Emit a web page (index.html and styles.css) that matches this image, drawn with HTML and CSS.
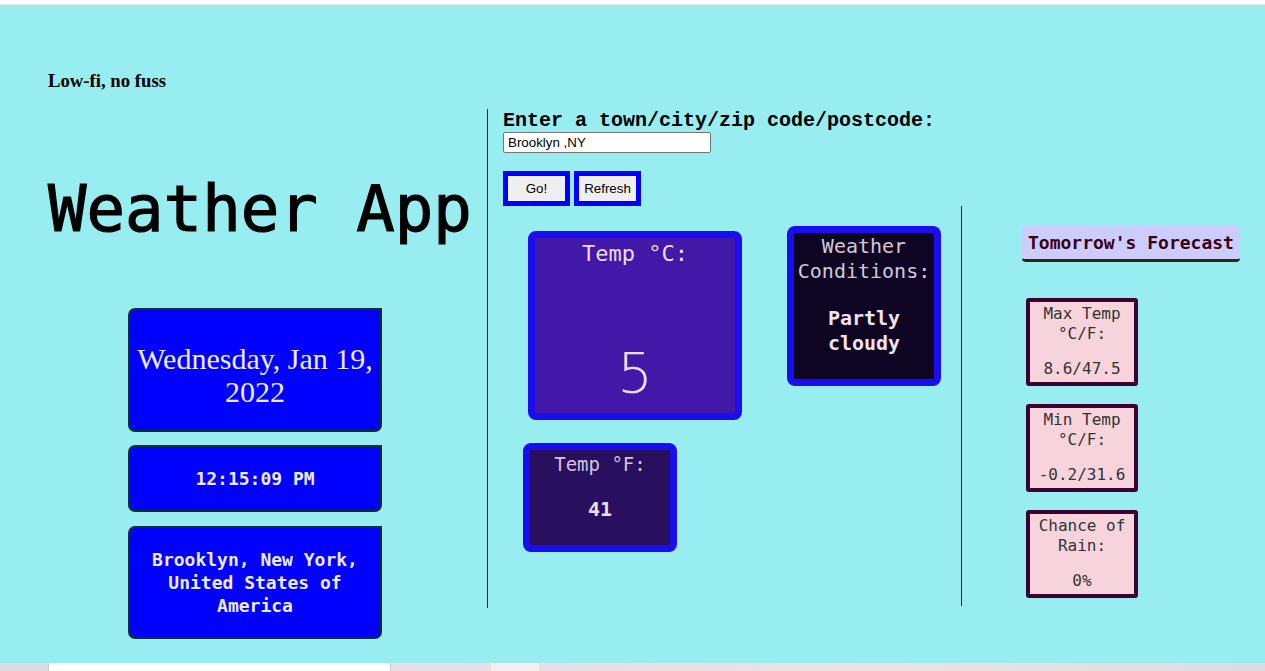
FILE: index.html
```html
<!DOCTYPE html>
<html lang="en">
<head>
<meta charset="utf-8">
<title>Weather App</title>
<link rel="stylesheet" href="styles.css">
</head>
<body>
<div class="topbar"></div>
<main class="app">
  <section class="intro">
    <h3 class="tagline">Low-fi, no fuss</h3>
    <h1 class="title">Weather App</h1>
    <div class="info-box date-box">Wednesday, Jan 19, 2022</div>
    <div class="info-box time-box">12:15:09 PM</div>
    <div class="info-box place-box">Brooklyn, New York, United States of America</div>
  </section>
  <section class="panel">
    <form class="search">
      <label class="search-label" for="city">Enter a town/city/zip code/postcode:</label>
      <input id="city" class="search-input" type="text" value="Brooklyn ,NY">
      <div class="buttons">
        <button type="button" class="btn">Go!</button>
        <button type="button" class="btn">Refresh</button>
      </div>
    </form>
    <div class="results">
      <div class="today">
        <div class="temps">
          <div class="card card-c">
            <div class="card-c-label">Temp °C:</div>
            <div class="card-c-value">5</div>
          </div>
          <div class="card card-f">
            <div class="card-f-label">Temp °F:</div>
            <div class="card-f-value">41</div>
          </div>
        </div>
        <div class="card card-cond">
          <div class="cond-label">Weather Conditions:</div>
          <div class="cond-value">Partly cloudy</div>
        </div>
      </div>
      <aside class="forecast">
        <div class="fc-title">Tomorrow's Forecast</div>
        <div class="fc-box">
          <div class="fc-label">Max Temp °C/F:</div>
          <div class="fc-value">8.6/47.5</div>
        </div>
        <div class="fc-box">
          <div class="fc-label">Min Temp °C/F:</div>
          <div class="fc-value">-0.2/31.6</div>
        </div>
        <div class="fc-box">
          <div class="fc-label">Chance of Rain:</div>
          <div class="fc-value">0%</div>
        </div>
      </aside>
    </div>
  </section>
</main>
<div class="taskbar">
  <span class="tb-left"></span>
  <span class="tb-white"></span>
  <span class="tb-mid"></span>
  <span class="tb-light"></span>
  <span class="tb-rest"></span>
</div>
</body>
</html>
```

FILE: styles.css
```css
* { box-sizing: border-box; }

html, body {
  margin: 0;
  padding: 0;
  background: #ffffff;
  height: 671px;
  overflow: hidden;
}

.topbar {
  height: 5px;
  background: #ffffff;
  border-bottom: 1px solid #e4e4e4;
}

.app {
  height: 658px;
  background: #97edf0;
  display: flex;
  align-items: flex-start;
}

/* ---------- left column ---------- */
.intro {
  width: 487px;
  flex: none;
  padding-left: 48px;
}

.tagline {
  margin: 65px 0 0;
  font-family: "Liberation Serif", "Times New Roman", serif;
  font-size: 18.72px;
  font-weight: bold;
  line-height: 22px;
  color: #000;
}

.title {
  margin: 80px 0 0;
  font-family: "DejaVu Sans Mono", monospace;
  font-size: 64px;
  font-weight: normal;
  line-height: 75px;
  color: #000;
  -webkit-text-stroke: 1.2px #000;
  white-space: nowrap;
}

.info-box {
  width: 254px;
  margin-left: 80px;
  background: #0000ff;
  border: 2px solid #0d3427;
  border-radius: 7px 0 7px 7px;
  color: #ecebf4;
  display: flex;
  align-items: center;
  justify-content: center;
  text-align: center;
  padding: 0 6px;
}

.date-box {
  margin-top: 61px;
  height: 124px;
  padding-top: 9px;
  font-family: "Liberation Serif", "Times New Roman", serif;
  font-size: 30px;
  line-height: 33px;
}

.time-box {
  margin-top: 13px;
  height: 67px;
  font-family: "DejaVu Sans Mono", monospace;
  font-weight: bold;
  font-size: 18px;
}

.place-box {
  margin-top: 14px;
  height: 113px;
  font-family: "DejaVu Sans Mono", monospace;
  font-weight: bold;
  font-size: 18px;
  line-height: 23px;
}

/* ---------- right panel ---------- */
.panel {
  margin-top: 104px;
  width: 778px;
  height: 499px;
  border-left: 1px solid #1e1e1e;
  padding: 1px 0 0 15px;
  flex: none;
}

.search {
  margin: 0;
}

.search-label {
  display: block;
  font-family: "Liberation Mono", "Courier New", monospace;
  font-weight: bold;
  font-size: 20px;
  line-height: 22px;
  color: #000;
  white-space: nowrap;
}

.search-input {
  display: block;
  width: 208px;
  height: 21px;
  margin: 0;
  padding: 1px 4px;
  border: 1px solid #767676;
  border-radius: 2px;
  background: #fff;
  font-family: "Liberation Sans", Arial, sans-serif;
  font-size: 13.33px;
  color: #000;
}

.buttons {
  display: flex;
  gap: 4px;
  margin-top: 18px;
}

.btn {
  width: 67px;
  height: 35px;
  margin: 0;
  padding: 0;
  border: 5px solid #0000ff;
  background: #efefef;
  font-family: "Liberation Sans", Arial, sans-serif;
  font-size: 13.33px;
  color: #000;
}

.results {
  display: flex;
  align-items: flex-start;
}

.today {
  width: 458px;
  flex: none;
  display: flex;
  align-items: flex-start;
}

.temps {
  display: flex;
  flex-direction: column;
  align-items: flex-start;
}

.card {
  border: 7px solid #1a0df2;
  border-radius: 8px;
  text-align: center;
  color: #efdcef;
}

.card-c {
  margin: 25px 0 0 25px;
  width: 214px;
  height: 189px;
  background: #4118a8;
  padding-top: 3px;
}

.card-c-label {
  font-family: "DejaVu Sans Mono", monospace;
  font-size: 22px;
  line-height: 26px;
}

.card-c-value {
  margin-top: 73px;
  font-family: "DejaVu Sans", sans-serif;
  font-weight: 200;
  font-size: 56px;
  line-height: 66px;
}

.card-f {
  margin: 23px 0 0 20px;
  width: 154px;
  height: 109px;
  background: #28105e;
  padding-top: 3px;
}

.card-f-label {
  font-family: "DejaVu Sans Mono", monospace;
  font-size: 19px;
  line-height: 22px;
  color: #d6c4de;
}

.card-f-value {
  margin-top: 23px;
  font-family: "DejaVu Sans Mono", monospace;
  font-weight: bold;
  font-size: 20px;
  line-height: 23px;
}

.card-cond {
  margin: 20px 0 0 45px;
  width: 154px;
  height: 160px;
  background: #0e0522;
  padding-top: 1px;
  font-family: "DejaVu Sans Mono", monospace;
  font-size: 20px;
  line-height: 25px;
}

.cond-label {
  color: #d4c8d8;
}

.cond-value {
  margin-top: 22px;
  font-weight: bold;
  color: #f2e2f0;
}

/* ---------- forecast ---------- */
.forecast {
  width: 304px;
  height: 400px;
  flex: none;
  border-left: 1px solid #1e1e1e;
  padding-left: 60px;
  display: flex;
  flex-direction: column;
  align-items: flex-start;
}

.fc-title {
  margin-top: 20px;
  height: 36px;
  padding: 0 6px;
  background: #ccccff;
  border-bottom: 3px solid #2c2812;
  border-radius: 4px;
  font-family: "DejaVu Sans Mono", monospace;
  font-weight: bold;
  font-size: 18px;
  line-height: 33px;
  color: #3a0012;
  white-space: nowrap;
}

.fc-box {
  margin: 36px 0 0 4px;
  width: 112px;
  height: 88px;
  background: #f7d3dc;
  border: 4px solid #3d0030;
  border-radius: 3px;
  padding-top: 2px;
  text-align: center;
  font-family: "DejaVu Sans Mono", monospace;
  font-size: 16px;
  line-height: 20px;
  color: #333;
}

.fc-box + .fc-box {
  margin-top: 18px;
}

.fc-value {
  margin-top: 15px;
}

/* ---------- bottom strip ---------- */
.taskbar {
  height: 8px;
  display: flex;
  background: linear-gradient(90deg, #efe2e2 0%, #e6dde6 40%, #efe2e0 70%, #dcdbe2 100%);
}

.tb-left {
  width: 48px;
  background: #dcdbe4;
}

.tb-white {
  width: 343px;
  background: #ffffff;
  border-left: 1px solid #c8c8c8;
  border-right: 1px solid #c8c8c8;
}

.tb-mid {
  width: 100px;
}

.tb-light {
  width: 48px;
  background: #f6eeee;
}

.tb-rest {
  flex: 1;
}
```
